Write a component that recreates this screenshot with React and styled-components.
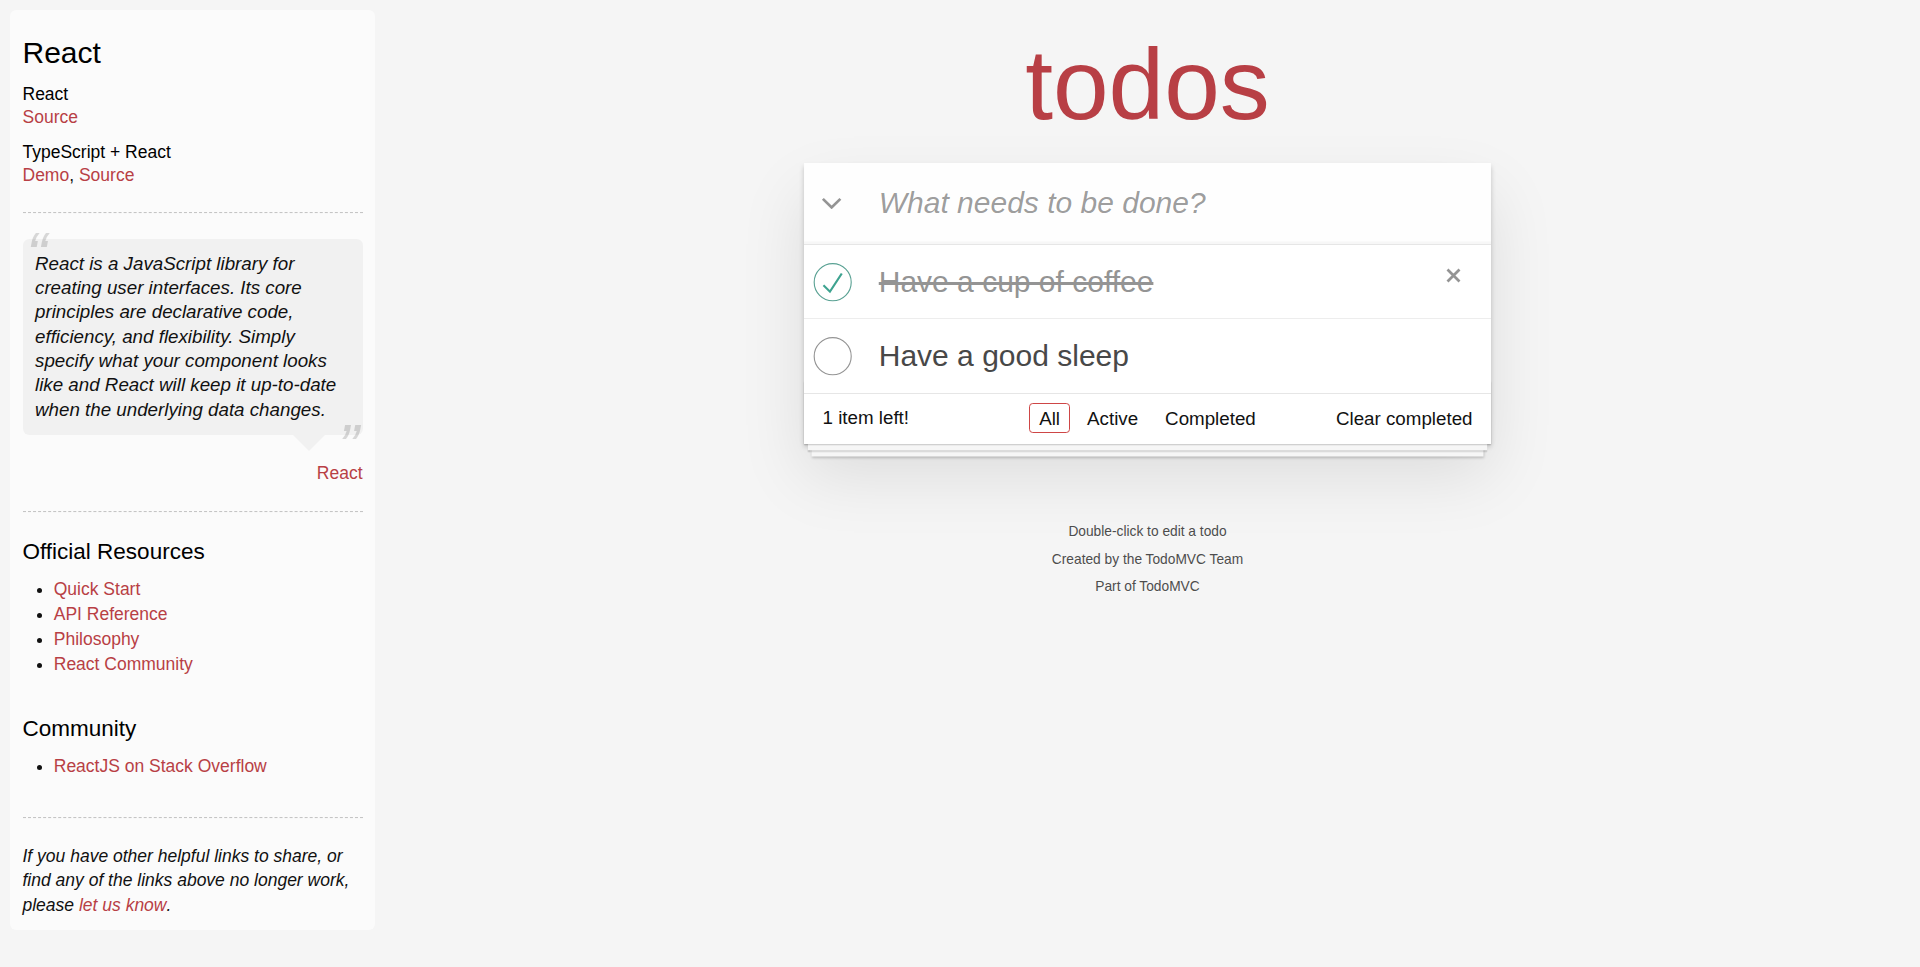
import React from "react"
import styled, { createGlobalStyle } from "styled-components"

const GlobalStyle = createGlobalStyle`
  html {
    background: #f5f5f5;
  }
  body {
    margin: 0;
    padding: 0;
    font-family: "Liberation Sans", Arial, Helvetica, sans-serif;
    -webkit-font-smoothing: antialiased;
  }
  #root {
    zoom: 1.25;
  }
`

const Page = styled.div`
  display: flex;
  align-items: flex-start;
  font-size: 14px;
  line-height: 19.6px;
  font-weight: 300;
  color: #111;
`

/* ---------- learn sidebar ---------- */

const Sidebar = styled.aside`
  flex-shrink: 0;
  width: 272px;
  padding: 10px;
  margin: 8px 0 0 8px;
  border-radius: 5px;
  background: rgba(255, 255, 255, 0.6);

  a {
    font-weight: normal;
    text-decoration: none;
    color: #b83f45;
  }
`

const SideTitle = styled.h3`
  margin: 10px 0;
  font-size: 24px;
  font-weight: 500;
  line-height: 1.2;
  color: #000;
`

const SourceLinks = styled.div`
  line-height: 19.6px;
`

const SourceLabel = styled.h5`
  margin: 10px 0 0;
  font-size: 14px;
  font-weight: 500;
  line-height: 1.2;
  color: #000;
`

const Rule = styled.hr`
  height: 0;
  margin: 20px 0;
  border: 0;
  border-top: 1px dashed #c5c5c5;
  border-bottom: 1px dashed #f7f7f7;
`

const Quote = styled.blockquote`
  margin: 20px 0 0;
`

const Bubble = styled.div`
  position: relative;
  padding: 10px;
  border-radius: 5px;
  background: rgba(0, 0, 0, 0.04);

  &::after {
    content: "";
    position: absolute;
    top: 100%;
    right: 30px;
    border: 13px solid transparent;
    border-top-color: rgba(0, 0, 0, 0.04);
  }
`

const QuoteText = styled.p`
  margin: 0;
  font-size: 15px;
  line-height: 1.3;
  font-style: italic;

  &::before,
  &::after {
    position: absolute;
    font-size: 50px;
    opacity: 0.15;
  }
  &::before {
    content: "“";
    top: -20px;
    left: 3px;
  }
  &::after {
    content: "”";
    bottom: -42px;
    right: 3px;
  }
`

const QuoteFooter = styled.div`
  margin-top: 20.4px;
  text-align: right;

  a {
    margin-left: 5px;
    vertical-align: middle;
  }
`

const SectionTitle = styled.h4`
  margin: 10px 0;
  font-size: 18px;
  font-weight: 500;
  line-height: 1.2;
  color: #000;
`

const LinkList = styled.ul`
  padding: 0;
  margin: 0 0 30px 25px;

  li {
    line-height: 20px;
  }
`

const SideNote = styled.em`
  display: block;
`

/* ---------- todo app ---------- */

const Main = styled.main`
  flex: 1;
  min-width: 0;
`

const Column = styled.section`
  width: 550px;
  margin: 0 auto;
`

const Title = styled.h1`
  margin: 0;
  padding: 27px 0 23px;
  font-size: 80px;
  line-height: 80px;
  font-weight: 200;
  text-align: center;
  color: #b83f45;
  text-rendering: optimizeLegibility;
`

const Card = styled.div`
  position: relative;
  margin: 0 0 40px;
  background: #fff;
  box-shadow: 0 2px 4px 0 rgba(0, 0, 0, 0.2), 0 25px 50px 0 rgba(0, 0, 0, 0.1);
`

const NewTodoRow = styled.header`
  display: flex;
  align-items: center;
  height: 65px;
  background: rgba(0, 0, 0, 0.003);
  box-shadow: inset 0 -2px 1px rgba(0, 0, 0, 0.03);
`

const ToggleAll = styled.label`
  display: flex;
  align-items: center;
  justify-content: center;
  flex-shrink: 0;
  width: 45px;
  height: 65px;
`

const NewTodo = styled.input`
  flex: 1;
  min-width: 0;
  height: 65px;
  box-sizing: border-box;
  margin: 0;
  padding: 16px 16px 16px 15px;
  border: none;
  outline: none;
  background: transparent;
  font-family: inherit;
  font-size: 24px;
  font-weight: inherit;
  line-height: 1.4em;
  color: inherit;

  &::placeholder {
    font-style: italic;
    font-weight: 400;
    color: rgba(0, 0, 0, 0.4);
  }
`

const TodoList = styled.ul`
  position: relative;
  z-index: 2;
  margin: 0;
  padding: 0;
  list-style: none;
  border-top: 1px solid #e6e6e6;
`

const TodoItem = styled.li`
  display: flex;
  align-items: center;
  font-size: 24px;
  border-bottom: 1px solid #ededed;

  &:last-child {
    border-bottom: none;
  }
`

const Toggle = styled.svg`
  flex-shrink: 0;
  display: block;
`

const TodoLabel = styled.label`
  flex: 1;
  padding: 15px 15px 15px 20px;
  line-height: 1.2;
  font-weight: 400;
  word-break: break-all;
  color: ${props => (props.$done ? "#949494" : "#484848")};
  text-decoration: ${props => (props.$done ? "line-through" : "none")};
`

const Destroy = styled.button`
  flex-shrink: 0;
  display: flex;
  align-items: flex-start;
  justify-content: center;
  width: 40px;
  height: 40px;
  margin: 0 10px 0 0;
  padding: 9.3px 0 0;
  border: 0;
  background: none;
  color: #949494;
  cursor: pointer;
`

const Footer = styled.footer`
  position: relative;
  display: grid;
  grid-template-columns: 1fr auto 1fr;
  height: 20px;
  padding: 10px 15px;
  font-size: 15px;
  border-top: 1px solid #e6e6e6;

  &::before {
    content: "";
    position: absolute;
    right: 0;
    bottom: 0;
    left: 0;
    height: 50px;
    overflow: hidden;
    pointer-events: none;
    box-shadow: 0 1px 1px rgba(0, 0, 0, 0.2), 0 8px 0 -3px #f6f6f6,
      0 9px 1px -3px rgba(0, 0, 0, 0.2), 0 16px 0 -6px #f6f6f6,
      0 17px 2px -6px rgba(0, 0, 0, 0.2);
  }
`

const Count = styled.span`
  text-align: left;
`

const Filters = styled.ul`
  display: flex;
  margin: 0;
  padding: 0;
  list-style: none;
`

const FilterLink = styled.a`
  margin: 3px;
  padding: 3px 7px;
  color: inherit;
  text-decoration: none;
  border: 1px solid ${props => (props.$selected ? "#ce4646" : "transparent")};
  border-radius: 3px;
  cursor: pointer;
`

const ClearButton = styled.button`
  justify-self: end;
  margin: 0;
  padding: 0;
  border: 0;
  background: none;
  font-family: inherit;
  font-size: 15px;
  font-weight: inherit;
  line-height: 19px;
  color: inherit;
  cursor: pointer;
`

const Info = styled.footer`
  margin: 65px auto 0;
  color: #4d4d4d;
  font-size: 11px;
  text-shadow: 0 1px 0 rgba(255, 255, 255, 0.5);
  text-align: center;

  p {
    margin: 11px 0;
    line-height: 1;
  }
  a {
    color: inherit;
    text-decoration: none;
  }
`

const todos = [
  { id: 1, title: "Have a cup of coffee", completed: true, hovered: true },
  { id: 2, title: "Have a good sleep", completed: false },
]

const filters = ["All", "Active", "Completed"]

const officialLinks = ["Quick Start", "API Reference", "Philosophy", "React Community"]

const CheckCircle = ({ checked }) => (
  <Toggle width="40" height="40" viewBox="-10 -18 100 135">
    <circle
      cx="50"
      cy="50"
      r="50"
      fill="none"
      stroke={checked ? "#59A193" : "#949494"}
      strokeWidth="3"
    />
    {checked && <path fill="#3EA390" d="M72 25L42 71 27 56l-4 4 20 20 34-52z" />}
  </Toggle>
)

const Learn = () => (
  <Sidebar>
    <header>
      <SideTitle>React</SideTitle>
      <SourceLinks>
        <SourceLabel>React</SourceLabel>
        <a href="#source">Source</a>
        <SourceLabel>TypeScript + React</SourceLabel>
        <a href="#demo">Demo</a>, <a href="#source-ts">Source</a>
      </SourceLinks>
    </header>
    <Rule />
    <Quote>
      <Bubble>
        <QuoteText>
          React is a JavaScript library for creating user interfaces. Its core principles are
          declarative code, efficiency, and flexibility. Simply specify what your component looks
          like and React will keep it up-to-date when the underlying data changes.
        </QuoteText>
      </Bubble>
      <QuoteFooter>
        <a href="#react">React</a>
      </QuoteFooter>
    </Quote>
    <Rule />
    <SectionTitle>Official Resources</SectionTitle>
    <LinkList>
      {officialLinks.map(l => (
        <li key={l}>
          <a href="#res">{l}</a>
        </li>
      ))}
    </LinkList>
    <SectionTitle>Community</SectionTitle>
    <LinkList>
      <li>
        <a href="#so">ReactJS on Stack Overflow</a>
      </li>
    </LinkList>
    <footer>
      <Rule />
      <SideNote>
        If you have other helpful links to share, or find any of the links above no longer work,
        please <a href="#issues">let us know</a>.
      </SideNote>
    </footer>
  </Sidebar>
)

const App = () => {
  const left = todos.filter(t => !t.completed).length
  return (
    <>
      <GlobalStyle />
      <Page>
        <Learn />
        <Main>
          <Column>
            <Title>todos</Title>
            <Card>
              <NewTodoRow>
                <ToggleAll>
                  <svg width="17" height="10" viewBox="0 0 17 10">
                    <polyline
                      points="1.5,1.5 8.5,8.3 15.5,1.5"
                      fill="none"
                      stroke="#949494"
                      strokeWidth="2.2"
                    />
                  </svg>
                </ToggleAll>
                <NewTodo placeholder="What needs to be done?" />
              </NewTodoRow>
              <TodoList>
                {todos.map(t => (
                  <TodoItem key={t.id}>
                    <CheckCircle checked={t.completed} />
                    <TodoLabel $done={t.completed}>{t.title}</TodoLabel>
                    {t.hovered && (
                      <Destroy aria-label="delete">
                        <svg width="12" height="12" viewBox="0 0 12 12">
                          <path
                            d="M1.2 1.2L10.8 10.8M10.8 1.2L1.2 10.8"
                            stroke="currentColor"
                            strokeWidth="2.2"
                          />
                        </svg>
                      </Destroy>
                    )}
                  </TodoItem>
                ))}
              </TodoList>
              <Footer>
                <Count>
                  {left} item{left === 1 ? "" : "s"} left!
                </Count>
                <Filters>
                  {filters.map(f => (
                    <li key={f}>
                      <FilterLink $selected={f === "All"}>{f}</FilterLink>
                    </li>
                  ))}
                </Filters>
                <ClearButton>Clear completed</ClearButton>
              </Footer>
            </Card>
            <Info>
              <p>Double-click to edit a todo</p>
              <p>Created by the TodoMVC Team</p>
              <p>
                Part of <a href="#todomvc">TodoMVC</a>
              </p>
            </Info>
          </Column>
        </Main>
      </Page>
    </>
  )
}

export default App
